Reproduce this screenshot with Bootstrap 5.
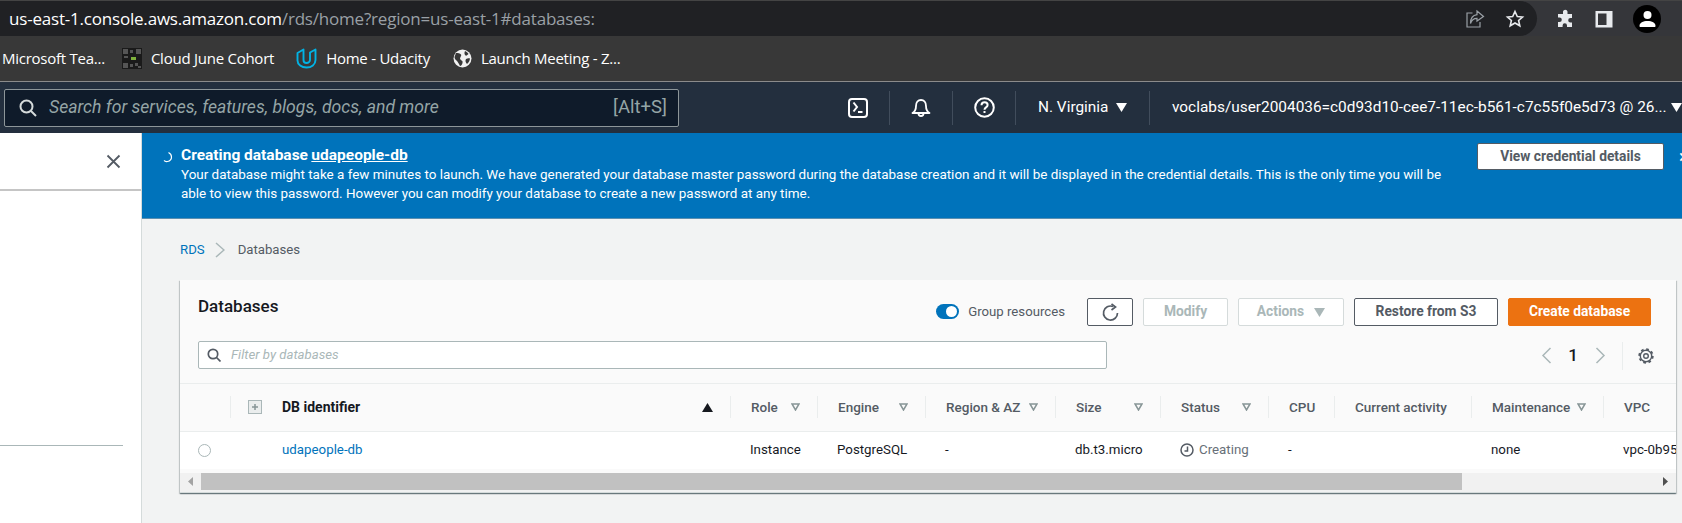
<!DOCTYPE html>
<html lang="en">
  <head>
    <meta charset="UTF-8" />
    <link href="https://cdn.jsdelivr.net/npm/bootstrap@5.3.1/dist/css/bootstrap.min.css" rel="stylesheet" />
    <title>RDS Databases</title>
    <style>
      html, body { height: 523px; overflow: hidden; }
      body { background: #f2f3f3; font-family: Roboto, "Liberation Sans", sans-serif; font-size: 14px; color: #16191f; }

      /* browser chrome */
      .url-row { height: 36px; background: #35363a; border-top: 1px solid #444; }
      .url-pill { width: 1537px; height: 35px; background: #202124; border-radius: 0 18px 18px 0; padding: 0 12px 0 9px; font-family: "Open Sans", sans-serif; font-size: 17px; letter-spacing: -0.2px; color: #fff; }
      .url-path { color: #9aa0a6; }
      .tool-ico { fill: #e8eaed; }
      .url-tools { gap: 20px; }
      .ext-tools { gap: 20px; padding-left: 18px; }
      .bookmarks { height: 46px; background: #383838; border-bottom: 1px solid #8b8b8b; padding-left: 2px; color: #fff; font-family: "Open Sans", sans-serif; font-size: 15px; letter-spacing: -0.25px; white-space: nowrap; }
      .mark-item { gap: 9px; }
      .mark-cloud { margin-left: 17px; }
      .mark-home { margin-left: 22px; }
      .mark-zoom { margin-left: 23px; }
      .avatar { width: 28px; height: 28px; border-radius: 50%; background: #000; }

      /* aws nav */
      .aws-nav { height: 51px; background: #232f3e; color: #fff; white-space: nowrap; padding-left: 4px; }
      .aws-search { width: 675px; height: 38px; flex-shrink: 0; background: #0f1b2a; border: 1px solid #8d9699; border-radius: 2px; padding: 0 11px 0 14px; }
      .aws-search-input { background: transparent; border: 0; outline: 0; flex: 1; padding: 0 0 0 12px; color: #fff; font-style: italic; font-size: 17.6px; }
      .aws-search-input::placeholder { color: #95a5a6; opacity: 1; }
      .aws-key { color: #95a5a6; font-size: 18.5px; }
      .nav-tools { margin-left: 148px; font-size: 15.4px; }
      .nav-cell { height: 34px; width: 63px; border-right: 1px solid #414d5c; }
      .region-cell { width: 134px; padding-left: 22px; gap: 8px; height: 34px; border-right: 1px solid #414d5c; }
      .acct-cell { padding-left: 22px; gap: 4px; }
      .caret-ico { flex-shrink: 0; fill: currentColor; }

      /* side panel + main */
      .side-panel { width: 142px; height: 390px; background: #fff; border-right: 1px solid #d5dbdb; flex-shrink: 0; }
      .side-head { height: 58px; border-bottom: 2px solid #c5c5c5; padding-right: 20px; }
      .side-rule { margin-top: 254px; width: 123px; border-top: 1px solid #aab7b8; }
      .main-pane { flex: 1; min-width: 0; }

      .flash-bar { height: 86px; background: #0073bb; border-bottom: 1px solid #5b8fb0; color: #fff; font-size: 13.45px; line-height: 19px; padding: 13px 0 0 21px; overflow: hidden; }
      .flash-text { width: 1275px; margin-left: 8px; flex-shrink: 0; }
      .flash-text a { color: #fff; font-weight: 700; font-size: 15.5px; }
      .flash-btn { width: 187px; height: 27px; margin: -3px 0 0 21px; background: #fff; border: 1px solid #545b64; border-radius: 2px; color: #545b64; font-weight: 700; font-size: 13.8px; line-height: 1; padding: 0; flex-shrink: 0; }
      .flash-close { margin-left: 15px; margin-top: 1px; font-size: 18px; }

      .crumbs { height: 61px; padding-left: 38px; color: #545b64; font-size: 13.2px; }
      .crumbs a { color: #0073bb; text-decoration: none; }
      .crumb-sep { margin: 0 13px 0 10px; }

      .db-panel { margin-left: 38px; margin-right: 6px; width: 1496px; height: 213px; background: #fafafa; border: 0; border-radius: 0; box-shadow: 0 1px 1px 0 rgba(0,28,36,.4), 1px 1px 1px 0 rgba(0,28,36,.15), -1px 1px 1px 0 rgba(0,28,36,.15); overflow: hidden; }
      .db-top { height: 62px; padding: 18px 25px 0 18px; }
      .db-title { font-size: 17px; font-weight: 500; margin: -5px 0 0; line-height: 27px; }
      .db-actions { gap: 10px; }
      .group-toggle { margin-right: 12px; gap: 9px; color: #545b64; font-size: 13.2px; }
      .toggle-track { width: 23px; height: 15px; border-radius: 8px; background: #0073bb; padding: 2px; justify-content: flex-end; }
      .toggle-knob { width: 11px; height: 11px; border-radius: 50%; background: #fff; }
      .aws-btn { height: 28px; padding: 0; background: #fff; border: 1px solid #545b64; border-radius: 2px; color: #545b64; font-size: 13.8px; font-weight: 700; line-height: 1; }
      .aws-btn:disabled { opacity: 1; border-color: #d5dbdb; color: #aab7b8; background: #fff; }
      .aws-btn-main { background: #ec7211; border-color: #ec7211; color: #fff; }
      .w-refresh { width: 46px; }
      .w-modify { width: 85px; }
      .w-actions { width: 106px; gap: 10px; }
      .w-restore { width: 144px; }
      .w-create { width: 143px; }

      .db-filter { height: 43px; padding: 0 22px 0 18px; border-bottom: 1px solid #eaeded; }
      .filter-wrap { width: 909px; height: 28px; margin-top: -1px; background: #fff; border: 1px solid #aab7b8; border-radius: 2px; padding: 0 9px 0 8px; gap: 10px; }
      .filter-input { flex: 1; border: 0; outline: 0; padding: 0; background: transparent; font-style: italic; font-size: 13.2px; }
      .filter-input::placeholder { color: #aab7b8; opacity: 1; }
      .pager { margin-left: auto; }
      .pager-num { font-weight: 500; font-size: 17px; margin: 0 17px 0 16px; }
      .pager-gear { margin-left: 16px; padding-left: 15px; border-left: 1px solid #eaeded; height: 28px; }

      .db-table { table-layout: fixed; width: 1520px; margin: 0; white-space: nowrap; font-size: 13.3px; }
      .db-table th { height: 47px; padding: 0; background: #fafafa; border-bottom: 1px solid #eaeded; color: #545b64; font-weight: 500; vertical-align: middle; font-size: 13.5px; }
      .db-table td { height: 38px; padding: 0 0 0 20px; background: #fff; border: 0; color: #16191f; vertical-align: middle; }
      .db-table td.radio-cell { padding-left: 18px; }
      .db-table td.id-cell { padding-left: 52px; }
      .db-table a { color: #0073bb; text-decoration: none; }
      .col-head { height: 22px; border-left: 1px solid #eaeded; padding: 0 17px 0 20px; justify-content: space-between; }
      .col-id { color: #16191f; font-weight: 700; font-size: 14px; }
      .expand-box { width: 14px; height: 14px; margin-right: 20px; margin-left: -3px; }
      .radio-ring { width: 13px; height: 13px; border: 1px solid #aab7b8; border-radius: 50%; background: #fff; }
      .status-wait { color: #687078; gap: 5px; }

      .scroll-bar { height: 20px; margin-top: 4px; background: #f1f1f1; border-bottom: 1px solid #d5dbdb; }
      .scroll-end { width: 21px; height: 17px; }
      .scroll-thumb { height: 17px; background: #c1c1c1; }
    </style>
  </head>

  <body>
    <!-- Browser address bar -->
    <div class="url-row d-flex align-items-start">
      <div class="url-pill d-flex align-items-center justify-content-between">
        <div>us-east-1.console.aws.amazon.com<span class="url-path">/rds/home?region=us-east-1#databases:</span></div>
        <div class="url-tools d-flex align-items-center">
          <svg width="20" height="20" viewBox="0 0 20 20" fill="none" stroke="#9aa0a6" stroke-width="1.2"><path d="M7.500 4H2v14h13v-5"/><path d="M12 2l6.500 5.500L12 12V9.300C8.500 9.300 6.500 11 5.500 14.500c0-5.500 2.500-8.300 6.500-8.800z"/></svg>
          <svg width="20" height="20" viewBox="0 0 20 20" fill="none" stroke="#e8eaed" stroke-width="1.6"><path d="M10 2.500l2.300 5 5.200.5-3.900 3.500 1.200 5.300-4.800-2.800-4.800 2.800 1.200-5.300L2.500 8l5.200-.5z"/></svg>
        </div>
      </div>
      <div class="ext-tools d-flex align-items-center h-100">
        <svg class="tool-ico" width="20" height="20" viewBox="0 0 20 20"><path d="M8 2.500a2.300 2.300 0 0 1 4.500 0V5H17v4h-1.500a2.300 2.300 0 0 0 0 4.600H17V18h-5v-1.500a2.200 2.200 0 0 0-4.400 0V18H3v-5h1.500a2.300 2.300 0 0 0 0-4.600H3V5h5z"/></svg>
        <svg width="18" height="18" viewBox="0 0 18 18"><rect x="0.500" y="1" width="17" height="16.500" fill="#e8eaed"/><rect x="3" y="3.500" width="8.500" height="11.500" fill="#35363a"/></svg>
        <div class="avatar d-flex align-items-center justify-content-center">
          <svg width="17" height="17" viewBox="0 0 17 17" fill="#fff"><circle cx="8.500" cy="5" r="4"/><path d="M0.500 16c0-3.500 3.500-5 8-5s8 1.500 8 5c0 .6-.4 1-1 1h-14c-.6 0-1-.4-1-1z"/></svg>
        </div>
      </div>
    </div>

    <!-- Bookmarks bar -->
    <div class="bookmarks d-flex align-items-center">
      <div>Microsoft Tea...</div>
      <div class="mark-item mark-cloud d-flex align-items-center">
        <svg width="20" height="21" viewBox="0 0 20 21"><rect width="20" height="21" fill="#1a1a1a"/><path d="M1 1h5v5H1zM14 1h5v5h-5zM1 15h5v5H1zM8 2h3v3H8zM2 8h4v2H2zM13 15h3v3h-3zM16 18h3v2h-3zM8 16h3v3H8z" fill="#555"/><rect x="9" y="9" width="5" height="3" fill="#7fb13c"/></svg>
        <span>Cloud June Cohort</span>
      </div>
      <div class="mark-item mark-home d-flex align-items-center">
        <svg width="21" height="21" viewBox="0 0 21 21" fill="none" stroke="#02b3e4" stroke-width="1.900" stroke-linejoin="round"><path d="M7.500 1.500L1.500 5v7.500C1.500 16.500 5.500 19.500 10.500 19.500s9-3 9-7.500V1.500L14 4.500v7.500c0 1.500-1.500 3-3.500 3S7.500 13.500 7.500 12z"/></svg>
        <span>Home - Udacity</span>
      </div>
      <div class="mark-item mark-zoom d-flex align-items-center">
        <svg width="19" height="19" viewBox="0 0 19 19"><circle cx="9.500" cy="9.500" r="9" fill="#f1f1f1"/><path d="M3 4c2 0 4 0 5 1.500S6 9 7.500 10.500 10 12 9.500 14 8 17 7 17c-1-2-2-4-3-5S1.500 10 1.500 8zM12 2c2 1 3 2 3.500 3-1 1-2 2-3 1.500S11 4 12 2zM13 10c1.500-1 3-1 4-.5-.3 2-1 4-3 5.500-1.500-1.500-2-3.500-1-5z" fill="#383838"/></svg>
        <span>Launch Meeting - Z...</span>
      </div>
    </div>

    <!-- AWS console nav -->
    <nav class="aws-nav d-flex align-items-center">
      <div class="aws-search d-flex align-items-center">
        <svg width="18" height="18" viewBox="0 0 18 18" fill="none" stroke="#d5dbdb" stroke-width="2"><circle cx="7.500" cy="7.500" r="6"/><path d="M12 12l5 5"/></svg>
        <input class="aws-search-input" type="text" placeholder="Search for services, features, blogs, docs, and more" />
        <span class="aws-key">[Alt+S]</span>
      </div>
      <div class="nav-tools d-flex align-items-center">
        <div class="nav-cell d-flex align-items-center justify-content-center">
          <svg width="20" height="20" viewBox="0 0 20 20" fill="none" stroke="#fff" stroke-width="2"><rect x="1" y="1" width="18" height="18" rx="3"/><path d="M5.500 4.500l3.500 4.500-3.500 4.500M10 14h4.500"/></svg>
        </div>
        <div class="nav-cell d-flex align-items-center justify-content-center">
          <svg width="20" height="20" viewBox="0 0 20 20" fill="none" stroke="#fff" stroke-width="1.800" stroke-linejoin="round"><path d="M1.500 15c2.500-1.500 3.500-3.500 3.500-7 0-3.500 2-6 5-6s5 2.500 5 6c0 3.500 1 5.500 3.500 7z"/><path d="M7.500 15.500a2.500 2.500 0 0 0 5 0"/></svg>
        </div>
        <div class="nav-cell d-flex align-items-center justify-content-center">
          <svg width="21" height="21" viewBox="0 0 21 21" fill="none" stroke="#fff" stroke-width="2"><circle cx="10.500" cy="10.500" r="9.300"/><path d="M7.500 8.300c0-1.800 1.400-3 3.100-3s3 1.200 3 2.700c0 2.400-3.100 2.400-3.100 4.800"/><path d="M10.500 14v2"/></svg>
        </div>
        <div class="region-cell d-flex align-items-center">N. Virginia <svg class="caret-ico" width="11" height="9" viewBox="0 0 11 9"><path d="M0 0h11L5.500 9z"/></svg></div>
        <div class="acct-cell d-flex align-items-center">voclabs/user2004036=c0d93d10-cee7-11ec-b561-c7c55f0e5d73 @ 26... <svg class="caret-ico" width="11" height="9" viewBox="0 0 11 9"><path d="M0 0h11L5.500 9z"/></svg></div>
      </div>
    </nav>

    <div class="d-flex">
      <!-- Collapsed side panel -->
      <aside class="side-panel">
        <div class="side-head d-flex align-items-center justify-content-end">
          <svg width="15" height="15" viewBox="0 0 15 15" stroke="#545b64" stroke-width="1.800"><path d="M1.500 1.500l12 12M13.500 1.500l-12 12"/></svg>
        </div>
        <div class="side-rule"></div>
      </aside>

      <main class="main-pane">
        <!-- Flash message -->
        <div class="flash-bar d-flex align-items-start">
          <svg class="mt-1 flex-shrink-0" width="10" height="14" viewBox="0 0 10 14" fill="none" stroke="#fff" stroke-width="1.200"><path d="M5.500 2.500c2 1 3 2.500 3 4.500s-1.500 4-4 4.500-3-.5-3.500-1"/></svg>
          <div class="flash-text">
            <a href="#" class="text-decoration-none">Creating database</a> <a href="#">udapeople-db</a><br />
            Your database might take a few minutes to launch. We have generated your database master password during the database creation and it will be displayed in the credential details. This is the only time you will be able to view this password. However you can modify your database to create a new password at any time.
          </div>
          <button class="btn flash-btn" type="button">View credential details</button>
          <span class="flash-close">&#215;</span>
        </div>

        <!-- Breadcrumb -->
        <div class="crumbs d-flex align-items-center">
          <a href="#">RDS</a>
          <svg class="crumb-sep" width="10" height="16" viewBox="0 0 10 16" fill="none" stroke="#aab7b8" stroke-width="1.500"><path d="M1 1l8 7-8 7"/></svg>
          <span>Databases</span>
        </div>

        <!-- Databases card -->
        <div class="card db-panel">
          <div class="db-top d-flex align-items-start justify-content-between">
            <h5 class="db-title">Databases</h5>
            <div class="d-flex align-items-center db-actions">
              <div class="group-toggle d-flex align-items-center">
                <div class="toggle-track d-flex align-items-center"><div class="toggle-knob"></div></div>
                <span>Group resources</span>
              </div>
              <button class="btn aws-btn w-refresh d-flex align-items-center justify-content-center" type="button" aria-label="Refresh">
                <svg width="17" height="19" viewBox="0 0 17 19" fill="none" stroke="#545b64" stroke-width="1.700"><path d="M11 3.500A7 7 0 1 0 15.500 10"/><path d="M9.500 1l4 3-4 3" /></svg>
              </button>
              <button class="btn aws-btn w-modify" type="button" disabled>Modify</button>
              <button class="btn aws-btn w-actions d-flex align-items-center justify-content-center" type="button" disabled>Actions <svg class="caret-ico" width="11" height="9" viewBox="0 0 11 9"><path d="M0 0h11L5.500 9z"/></svg></button>
              <button class="btn aws-btn w-restore" type="button">Restore from S3</button>
              <button class="btn aws-btn aws-btn-main w-create" type="button">Create database</button>
            </div>
          </div>

          <div class="db-filter d-flex align-items-start">
            <div class="filter-wrap d-flex align-items-center">
              <svg width="14" height="14" viewBox="0 0 14 14" fill="none" stroke="#545b64" stroke-width="1.700"><circle cx="6" cy="6" r="4.700"/><path d="M9.500 9.500l4 4"/></svg>
              <input class="filter-input" type="text" placeholder="Filter by databases" />
            </div>
            <div class="pager d-flex align-items-center">
              <svg width="11" height="17" viewBox="0 0 11 17" fill="none" stroke="#aab7b8" stroke-width="1.500"><path d="M9.500 1L2 8.500 9.500 16"/></svg>
              <span class="pager-num">1</span>
              <svg width="11" height="17" viewBox="0 0 11 17" fill="none" stroke="#aab7b8" stroke-width="1.500"><path d="M1.500 1L9 8.500 1.500 16"/></svg>
              <div class="pager-gear d-flex align-items-center">
                <svg width="16" height="16" viewBox="0 0 16 16" fill="none" stroke="#545b64"><circle cx="8" cy="8" r="5.700" stroke-width="1.400"/><circle cx="8" cy="8" r="6.800" stroke-width="1.800" stroke-dasharray="2.700 2.640"/><circle cx="8" cy="8" r="2.300" stroke-width="1.400"/></svg>
              </div>
            </div>
          </div>

          <table class="table db-table">
            <colgroup>
              <col style="width: 50px" /><col style="width: 500px" /><col style="width: 87px" /><col style="width: 108px" /><col style="width: 130px" /><col style="width: 105px" /><col style="width: 108px" /><col style="width: 66px" /><col style="width: 137px" /><col style="width: 132px" /><col style="width: 97px" />
            </colgroup>
            <thead>
              <tr>
                <th></th>
                <th>
                  <div class="col-head d-flex align-items-center">
                    <span class="d-flex align-items-center col-id">
                      <svg class="expand-box" viewBox="0 0 14 14"><rect x=".5" y=".5" width="13" height="13" fill="#eaeded" stroke="#aab7b8"/><path d="M7 4v6M4 7h6" stroke="#879596" stroke-width="1.500"/></svg>
                      DB identifier
                    </span>
                    <svg width="11" height="9" viewBox="0 0 11 9"><path d="M5.500 0L11 9H0z" fill="#16191f"/></svg>
                  </div>
                </th>
                <th id="role-head"></th>
                <th id="engine-head"></th>
                <th id="region-head"></th>
                <th id="size-head"></th>
                <th id="status-head"></th>
                <th id="cpu-head"></th>
                <th id="activity-head"></th>
                <th id="maint-head"></th>
                <th id="vpc-head"></th>
              </tr>
            </thead>
            <tbody>
              <tr>
                <td class="radio-cell"><div class="radio-ring"></div></td>
                <td class="id-cell"><a href="#">udapeople-db</a></td>
                <td>Instance</td>
                <td>PostgreSQL</td>
                <td>-</td>
                <td>db.t3.micro</td>
                <td>
                  <div class="status-wait d-flex align-items-center">
                    <svg width="14" height="14" viewBox="0 0 14 14" fill="none" stroke="#545b64" stroke-width="1.500"><circle cx="7" cy="7" r="6"/><path d="M7.500 3.500V8H4.500"/></svg>
                    Creating
                  </div>
                </td>
                <td>-</td>
                <td></td>
                <td>none</td>
                <td>vpc-0b95</td>
              </tr>
            </tbody>
          </table>

          <div class="scroll-bar d-flex">
            <div class="scroll-end d-flex align-items-center justify-content-center">
              <svg width="5" height="9" viewBox="0 0 5 9"><path d="M5 0v9L0 4.500z" fill="#a3a3a3"/></svg>
            </div>
            <div class="scroll-thumb" style="width: 1261px"></div>
            <div class="scroll-end d-flex align-items-center justify-content-center ms-auto">
              <svg width="5" height="9" viewBox="0 0 5 9"><path d="M0 0v9l5-4.500z" fill="#505050"/></svg>
            </div>
          </div>
        </div>
      </main>
    </div>

    <template id="col-template">
      <div class="col-head d-flex align-items-center">
        <span class="col-label"></span>
        <svg class="col-filter" width="9" height="8" viewBox="0 0 9 8" fill="none" stroke="#879596" stroke-width="1.500"><path d="M1 1h7L4.500 7z"/></svg>
      </div>
    </template>

    <script>
      // Sortable column headers, filter triangle only on the ones that have it
      const columns = [
        { id: 'role-head', label: 'Role', filter: true },
        { id: 'engine-head', label: 'Engine', filter: true },
        { id: 'region-head', label: 'Region & AZ', filter: true },
        { id: 'size-head', label: 'Size', filter: true },
        { id: 'status-head', label: 'Status', filter: true },
        { id: 'cpu-head', label: 'CPU', filter: false },
        { id: 'activity-head', label: 'Current activity', filter: false },
        { id: 'maint-head', label: 'Maintenance', filter: true },
        { id: 'vpc-head', label: 'VPC', filter: false }
      ];

      columns.forEach(col => {
        const node = document.getElementById('col-template').content.cloneNode(true);
        node.querySelector('.col-label').innerText = col.label;
        if (!col.filter) node.querySelector('.col-filter').remove();
        document.getElementById(col.id).appendChild(node);
      });
    </script>
    <script src="https://cdn.jsdelivr.net/npm/bootstrap@5.3.1/dist/js/bootstrap.bundle.min.js"></script>
  </body>
</html>
